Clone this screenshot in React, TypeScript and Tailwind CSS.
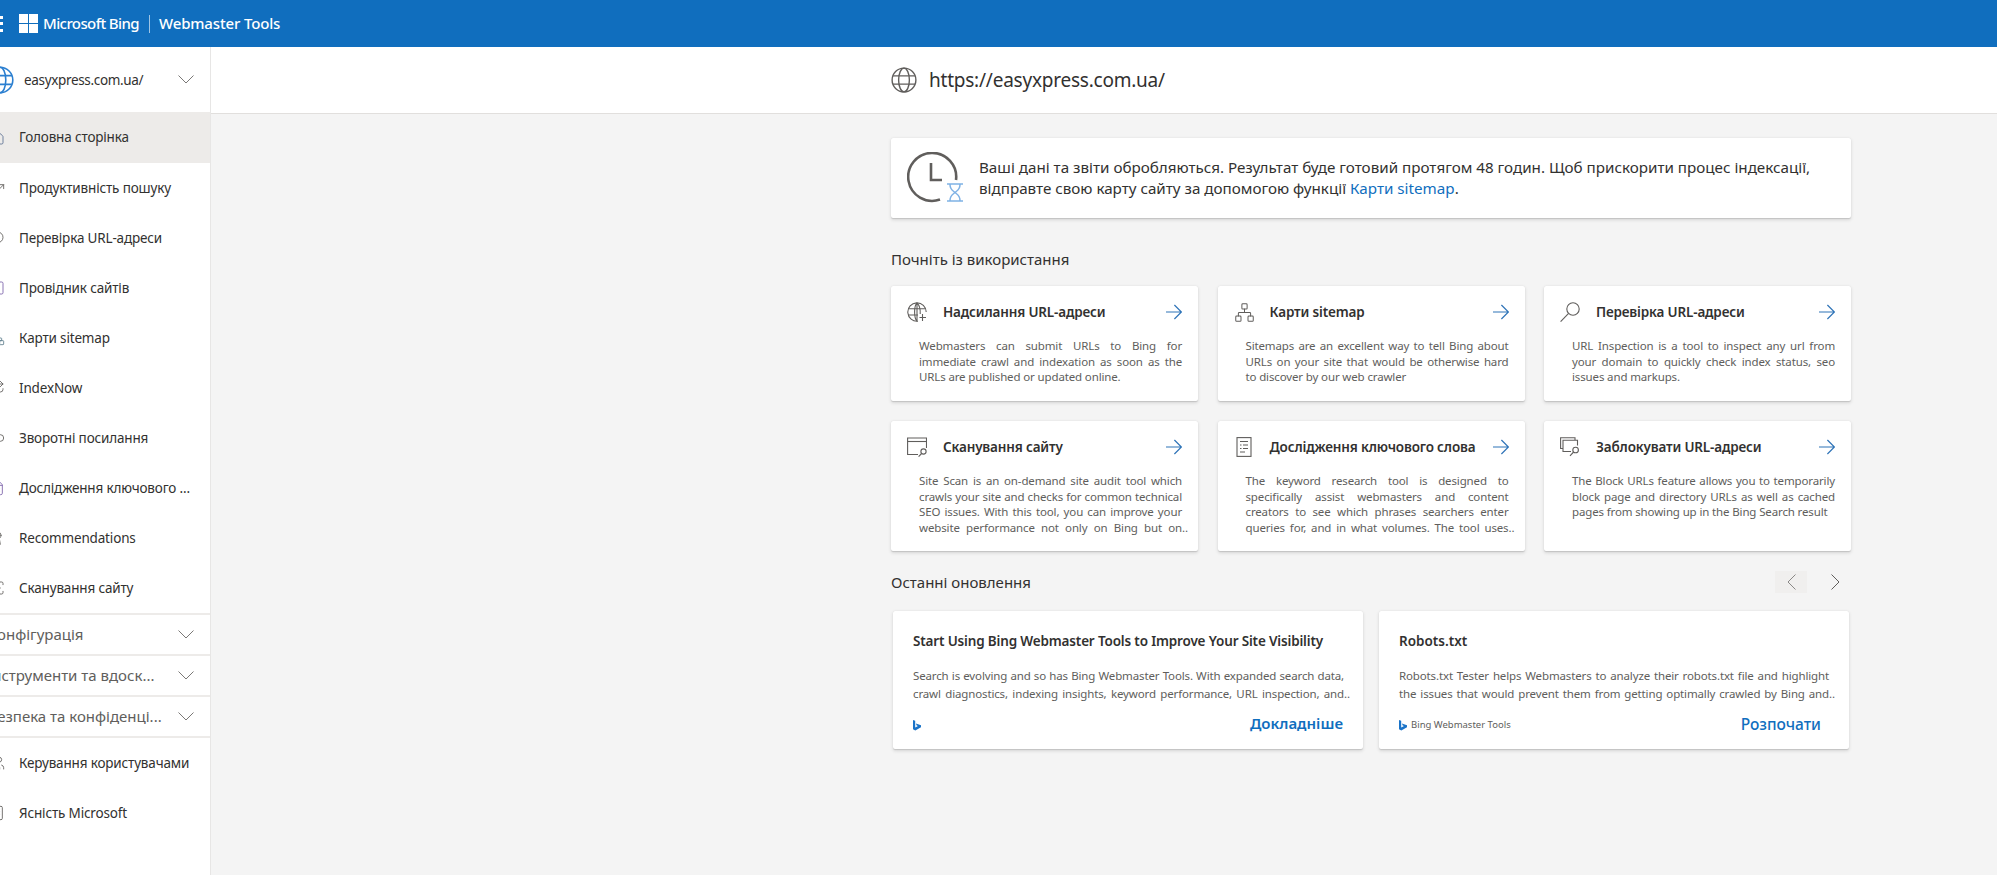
import { ReactNode } from 'react';
import {
    House,
    TrendingUp,
    Search,
    Square,
    Network,
    Repeat,
    Link2,
    FileText,
    Award,
    ScanLine,
    Users,
    Building
} from 'lucide-react';

const Chevron = ({ className = '' }: { className?: string }) => (
    <svg width="16" height="9" viewBox="0 0 16 9" fill="none" stroke="#7a7876" strokeWidth="1" className={`shrink-0 ${className}`}>
        <path d="M0.5 0.5L8 8L15.5 0.5" />
    </svg>
);

const Arrow = () => (
    <svg width="16" height="16" viewBox="0 0 16 16" fill="none" stroke="#2f74b8" strokeWidth="1.2" className="shrink-0">
        <path d="M0 8H15.2M8.4 1L15.4 8L8.4 15" />
    </svg>
);

const Globe = ({ size, color, width, className = '' }: { size: number; color: string; width: number; className?: string }) => (
    <svg width={size} height={size} viewBox="0 0 28 28" fill="none" stroke={color} strokeWidth={width} className={className}>
        <circle cx="14" cy="14" r="12.8" />
        <ellipse cx="14" cy="14" rx="5.8" ry="12.8" />
        <path d="M2.2 9.6H25.8M2.2 18.4H25.8" />
    </svg>
);

const BingLogo = ({ className = '' }: { className?: string }) => (
    <svg width="8" height="11" viewBox="0 0 8 11" className={className}>
        <path d="M0 0L2.2 0.8V7.6L5 6L3.7 5.4L2.9 3.4L8 5.2V7.3L2.3 10.6L0 9.3Z" fill="#1a73c8" />
    </svg>
);

const SubmitIcon = () => (
    <svg width="20" height="20" viewBox="0 0 20 20" fill="none" stroke="#605e5c" strokeWidth="1.1">
        <path d="M11 19.2A9.2 9.2 0 1 1 19.2 10" />
        <path d="M10 0.8C6.8 4 6.8 16 10 19.2M10 0.8C13.2 4 13.4 9 13.2 12M10 0.8V19.2M1.2 6.8H18.6M1.2 13H11" />
        <path d="M15.5 12V19M12.5 15.5H19" />
    </svg>
);

const LensIcon = () => (
    <svg width="20" height="20" viewBox="0 0 20 20" fill="none" stroke="#605e5c" strokeWidth="1.1">
        <circle cx="13" cy="7" r="6.2" />
        <path d="M8.6 11.4L0.6 19.6" />
    </svg>
);

const ScanIcon = () => (
    <svg width="20" height="20" viewBox="0 0 20 20" fill="none" stroke="#605e5c" strokeWidth="1.1">
        <path d="M11 17.5H0.6V1H19.5V11" />
        <path d="M0.6 4.5H19.5" />
        <circle cx="16.5" cy="14.5" r="2.6" />
        <path d="M14.6 16.5L11.6 19.6" />
    </svg>
);

const KeywordIcon = () => (
    <svg width="20" height="20" viewBox="0 0 20 20" fill="none" stroke="#605e5c" strokeWidth="1.1">
        <rect x="3" y="0.6" width="14" height="18.8" />
        <path d="M6 4.5H14M6 8H7.5M9 8H14M6 11.5H7.5M9 11.5H14M6 15H11" />
    </svg>
);

const BlockIcon = () => (
    <svg width="20" height="20" viewBox="0 0 20 20" fill="none" stroke="#605e5c" strokeWidth="1.1">
        <path d="M3 11.5H0.6V0.8H15V3" />
        <path d="M11 14.5H3V3.2H17.5V8.5" />
        <circle cx="15.6" cy="13" r="2.8" />
        <path d="M13.6 15L10 18.8" />
    </svg>
);

const ClockIcon = () => (
    <svg width="58" height="52" viewBox="0 0 58 52" fill="none" className="shrink-0">
        <path d="M49 28A24 24 0 1 0 33 47.6" stroke="#605e5c" strokeWidth="2.6" />
        <path d="M24 11V28H35" stroke="#605e5c" strokeWidth="2.6" />
        <path d="M40 32H56M40 49H56M43 32.5C43 38 46 38.5 48 40.5C46 42.5 43 43 43 48.5M53 32.5C53 38 50 38.5 48 40.5C50 42.5 53 43 53 48.5" stroke="#7fb2e5" strokeWidth="1.5" />
    </svg>
);

const mainLinks: { label: string; icon: ReactNode; extra?: string; active?: boolean }[] = [
    { label: 'Головна сторінка', icon: <House size={16} strokeWidth={1.3} color="#5a6f92" />, active: true },
    { label: 'Продуктивність пошуку', icon: <TrendingUp size={16} strokeWidth={1.3} color="#605e5c" /> },
    { label: 'Перевірка URL-адреси', icon: <Search size={16} strokeWidth={1.3} color="#605e5c" className="-scale-x-100" /> },
    { label: 'Провідник сайтів', icon: <Square size={16} strokeWidth={1.3} color="#7a5fa8" /> },
    { label: 'Карти sitemap', icon: <Network size={16} strokeWidth={1.3} color="#5f7f8f" /> },
    { label: 'IndexNow', icon: <Repeat size={16} strokeWidth={1.3} color="#605e5c" />, extra: 'ml-[3px]' },
    { label: 'Зворотні посилання', icon: <Link2 size={16} strokeWidth={1.3} color="#605e5c" /> },
    { label: 'Дослідження ключового ...', icon: <FileText size={16} strokeWidth={1.3} color="#7a5fa8" /> },
    { label: 'Recommendations', icon: <Award size={16} strokeWidth={1.3} color="#605e5c" /> },
    { label: 'Сканування сайту', icon: <ScanLine size={16} strokeWidth={1.3} color="#605e5c" /> }
];

const sections = ['Конфігурація', 'Інструменти та вдоск...', 'Безпека та конфіденці...'];

const bottomLinks = [
    { label: 'Керування користувачами', icon: <Users size={16} strokeWidth={1.3} color="#605e5c" /> },
    { label: 'Ясність Microsoft', icon: <Building size={16} strokeWidth={1.3} color="#605e5c" /> }
];

const NavItem = ({ label, icon, extra, active }: { label: string; icon: ReactNode; extra?: string; active?: boolean }) => (
    <div className={`flex items-center pl-[9px] text-[13.5px] tracking-[-0.012em] text-[#323130] ${active ? 'bg-[#edebe9] h-[51px]' : 'h-[50px]'}`}>
        <span className="w-[16px] shrink-0">{icon}</span>
        <span className={`ml-[14px] whitespace-nowrap ${extra || ''}`}>{label}</span>
    </div>
);

const cards: { title: string; icon: ReactNode; lines: string[]; last?: string; more?: boolean }[] = [
    {
        title: 'Надсилання URL-адреси',
        icon: <SubmitIcon />,
        lines: ['Webmasters can submit URLs to Bing for', 'immediate crawl and indexation as soon as the'],
        last: 'URLs are published or updated online.'
    },
    {
        title: 'Карти sitemap',
        icon: <Network size={21} strokeWidth={1.15} color="#605e5c" />,
        lines: ['Sitemaps are an excellent way to tell Bing about', 'URLs on your site that would be otherwise hard'],
        last: 'to discover by our web crawler'
    },
    {
        title: 'Перевірка URL-адреси',
        icon: <LensIcon />,
        lines: ['URL Inspection is a tool to inspect any url from', 'your domain to quickly check index status, seo'],
        last: 'issues and markups.'
    },
    {
        title: 'Сканування сайту',
        icon: <ScanIcon />,
        lines: [
            'Site Scan is an on-demand site audit tool which',
            'crawls your site and checks for common technical',
            'SEO issues. With this tool, you can improve your',
            'website performance not only on Bing but on'
        ],
        more: true
    },
    {
        title: 'Дослідження ключового слова',
        icon: <KeywordIcon />,
        lines: [
            'The keyword research tool is designed to',
            'specifically assist webmasters and content',
            'creators to see which phrases searchers enter',
            'queries for, and in what volumes. The tool uses'
        ],
        more: true
    },
    {
        title: 'Заблокувати URL-адреси',
        icon: <BlockIcon />,
        lines: ['The Block URLs feature allows you to temporarily', 'block page and directory URLs as well as cached'],
        last: 'pages from showing up in the Bing Search result'
    }
];

const shadow = 'rounded-[2px] bg-white shadow-[0_1.6px_3.6px_rgba(0,0,0,0.13),0_0.3px_0.9px_rgba(0,0,0,0.11)]';

const Line = ({ text, more }: { text: string; more?: boolean }) => (
    <div className="relative whitespace-nowrap [text-align-last:justify]">
        {text}
        {more && <span className="absolute left-full top-0">..</span>}
    </div>
);

const App = () => {
    return (
        <div className="-ml-[20px] flex h-[875px] w-[2017px] flex-col overflow-hidden bg-white font-['Noto_Sans','Open_Sans',sans-serif]">
            <header className="flex h-[47px] shrink-0 items-center bg-[#106ebe] text-white">
                <div className="ml-[6px] grid w-[17px] grid-cols-3 gap-x-[4px] gap-y-[3.5px]">
                    {[0, 1, 2, 3, 4, 5, 6, 7, 8].map((i) => (
                        <span key={i} className="h-[3px] w-[3px] bg-white" />
                    ))}
                </div>
                <div className="ml-[16px] grid h-[19px] w-[19px] grid-cols-2 gap-[1.5px]">
                    <span className="bg-white" />
                    <span className="bg-white" />
                    <span className="bg-white" />
                    <span className="bg-white" />
                </div>
                <span className="ml-[5px] text-[15px] font-medium tracking-[-0.04em]">Microsoft Bing</span>
                <span className="ml-[10px] h-[18px] w-px bg-white/60" />
                <span className="ml-[9px] text-[15px] font-medium tracking-[-0.01em]">Webmaster Tools</span>
            </header>

            <div className="flex min-h-0 flex-1">
                <aside className="w-[231px] shrink-0 border-r border-[#e7e6e5] bg-white">
                    <div className="flex h-[65px] items-center">
                        <Globe size={28} color="#2b7fd0" width={1.6} className="ml-[6px] shrink-0" />
                        <span className="ml-[10px] pt-[1px] text-[13.5px] tracking-[-0.025em] text-[#323130]">easyxpress.com.ua/</span>
                        <Chevron className="ml-auto mr-[16px]" />
                    </div>
                    {mainLinks.map((link) => (
                        <NavItem key={link.label} {...link} />
                    ))}
                    {sections.map((label) => (
                        <div key={label} className="flex h-[41px] items-center justify-between border-t-2 border-[#edebe9] pl-[8px] pr-[16px] text-[15px] text-[#605e5c]">
                            <span className="whitespace-nowrap">{label}</span>
                            <Chevron />
                        </div>
                    ))}
                    <div className="border-t-2 border-[#edebe9]">
                        {bottomLinks.map((link) => (
                            <NavItem key={link.label} {...link} />
                        ))}
                    </div>
                </aside>

                <main className="min-w-0 flex-1 bg-[#f4f4f4]">
                    <div className="flex h-[67px] items-center gap-[12px] border-b border-[#e1dfdd] bg-white pl-[680px]">
                        <Globe size={26} color="#605e5c" width={1.5} />
                        <span className="pt-[1px] text-[19px] tracking-[-0.012em] text-[#323130]">https://easyxpress.com.ua/</span>
                    </div>

                    <div className="ml-[680px] w-[960px] pt-[24px]">
                        <div className={`flex h-[80px] items-center pl-[16px] ${shadow}`}>
                            <ClockIcon />
                            <p className="ml-[14px] whitespace-nowrap text-[15.2px] leading-[21px] text-[#323130]">
                                Ваші дані та звіти обробляються. Результат буде готовий протягом 48 годин. Щоб прискорити процес індексації,
                                <br />
                                відправте свою карту сайту за допомогою функції <span className="text-[#106ebe]">Карти sitemap</span>.
                            </p>
                        </div>

                        <h2 className="mb-[16px] mt-[30px] h-[22px] text-[15px] font-normal leading-[22px] text-[#323130]">Почніть із використання</h2>

                        <div className="grid grid-cols-3 grid-rows-[115px_130px] gap-x-[19.5px] gap-y-[20px]">
                            {cards.map((card) => (
                                <div key={card.title} className={`px-[16px] pt-[16px] ${shadow}`}>
                                    <div className="flex h-[20px] items-center">
                                        <span className="flex w-[36px] shrink-0">{card.icon}</span>
                                        <span className="flex-1 whitespace-nowrap text-[13.5px] font-semibold tracking-[-0.012em] text-[#323130]">{card.title}</span>
                                        <Arrow />
                                    </div>
                                    <div className="mt-[16px] pl-[12px] text-[11.5px] leading-[15.6px] tracking-[-0.012em] text-[#605e5c]">
                                        {card.lines.map((line, i) => (
                                            <Line key={i} text={line} more={card.more && i === card.lines.length - 1} />
                                        ))}
                                        {card.last && <div className="whitespace-nowrap">{card.last}</div>}
                                    </div>
                                </div>
                            ))}
                        </div>

                        <div className="mb-[18px] mt-[20px] flex h-[22px] items-center justify-between">
                            <h2 className="text-[15px] font-normal text-[#323130]">Останні оновлення</h2>
                            <div className="flex items-center gap-[12px]">
                                <span className="flex h-[22px] w-[32px] items-center justify-center bg-[#f0efee]">
                                    <svg width="9" height="16" viewBox="0 0 9 16" fill="none" stroke="#8a8886" strokeWidth="1"><path d="M8.5 0.5L1 8L8.5 15.5" /></svg>
                                </span>
                                <span className="flex h-[22px] w-[32px] items-center justify-center">
                                    <svg width="9" height="16" viewBox="0 0 9 16" fill="none" stroke="#605e5c" strokeWidth="1"><path d="M0.5 0.5L8 8L0.5 15.5" /></svg>
                                </span>
                            </div>
                        </div>

                        <div className="flex gap-[16px] pl-[2px]">
                            <div className={`h-[138px] w-[470px] px-[20px] pt-[20px] ${shadow}`}>
                                <div className="h-[20px] whitespace-nowrap text-[13.5px] font-semibold leading-[20px] tracking-[-0.012em] text-[#323130]">
                                    Start Using Bing Webmaster Tools to Improve Your Site Visibility
                                </div>
                                <div className="mt-[16px] w-[431px] text-[11.5px] leading-[18px] tracking-[-0.012em] text-[#605e5c]">
                                    <Line text="Search is evolving and so has Bing Webmaster Tools. With expanded search data," />
                                    <Line text="crawl diagnostics, indexing insights, keyword performance, URL inspection, and" more />
                                </div>
                                <div className="mt-[7px] flex h-[26px] items-center justify-between">
                                    <BingLogo className="mt-[5px]" />
                                    <span className="text-[15px] font-semibold text-[#106ebe]">Докладніше</span>
                                </div>
                            </div>

                            <div className={`h-[138px] w-[470px] px-[20px] pt-[20px] ${shadow}`}>
                                <div className="h-[20px] text-[13.5px] font-semibold leading-[20px] text-[#323130]">Robots.txt</div>
                                <div className="mt-[16px] w-[430px] text-[11.5px] leading-[18px] tracking-[-0.012em] text-[#605e5c]">
                                    <Line text="Robots.txt Tester helps Webmasters to analyze their robots.txt file and highlight" />
                                    <Line text="the issues that would prevent them from getting optimally crawled by Bing and" more />
                                </div>
                                <div className="mt-[9px] flex h-[26px] items-center justify-between pr-[8px]">
                                    <span className="flex items-center gap-[4px] text-[9.5px] text-[#605e5c]">
                                        <BingLogo />
                                        Bing Webmaster Tools
                                    </span>
                                    <span className="text-[15.5px] font-medium text-[#106ebe]">Розпочати</span>
                                </div>
                            </div>
                        </div>
                    </div>
                </main>
            </div>
        </div>
    );
};

export default App;
